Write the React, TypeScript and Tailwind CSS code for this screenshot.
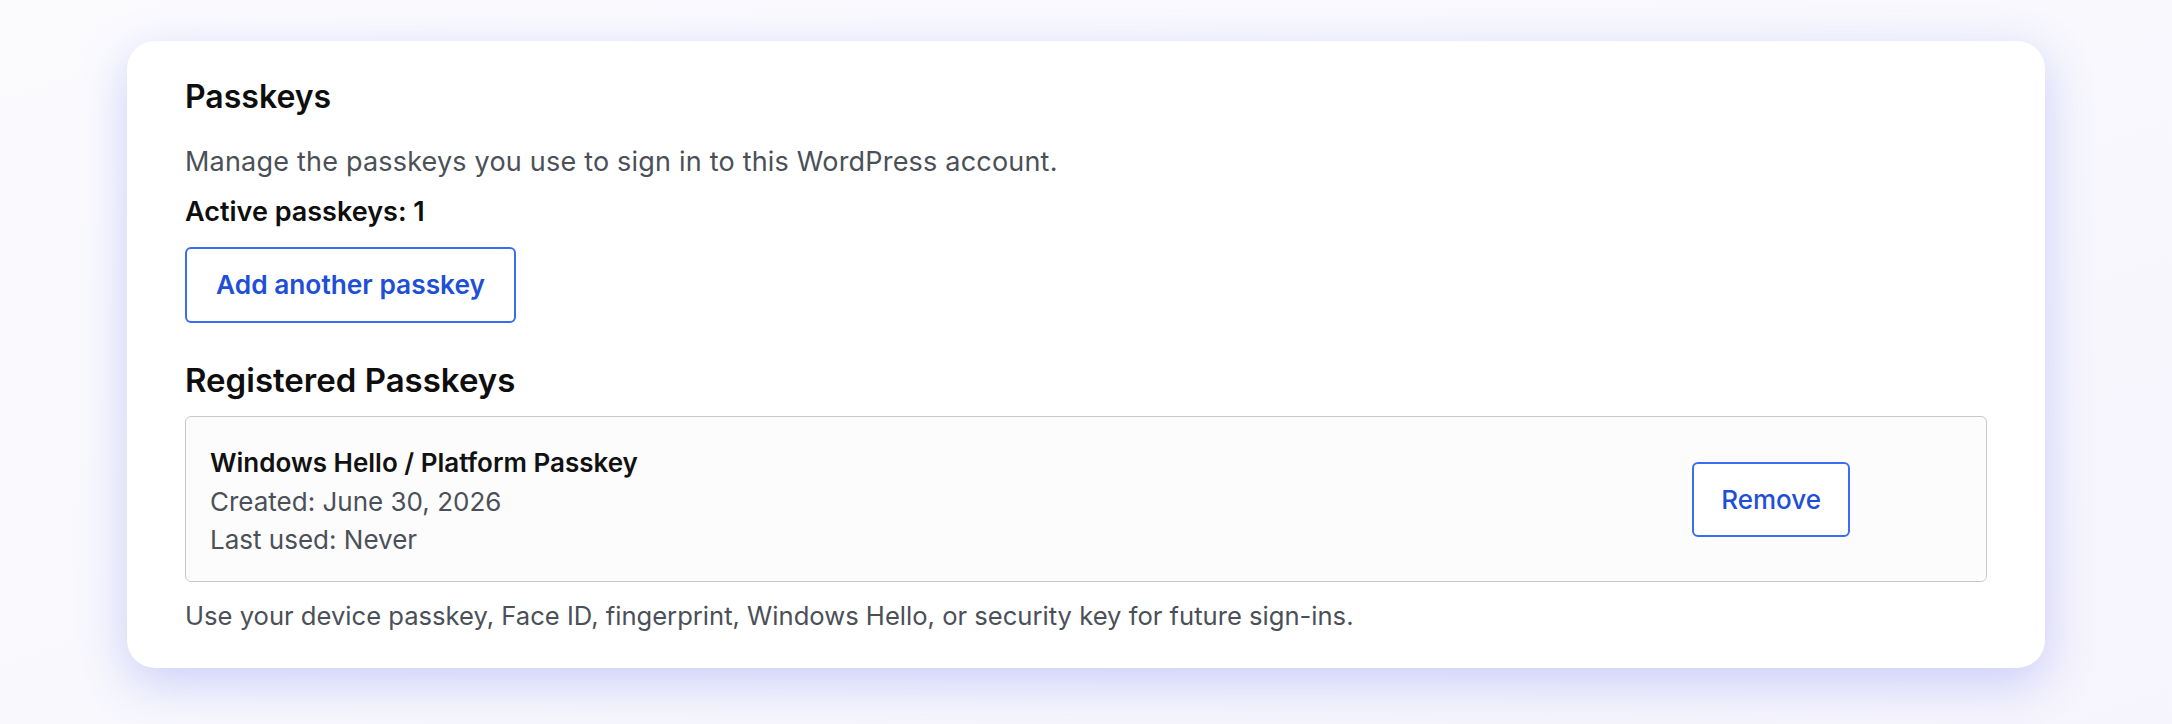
import React from "react";

type Passkey = {
  name: string;
  created: string;
  lastUsed: string;
};

const passkeys: Passkey[] = [
  {
    name: "Windows Hello / Platform Passkey",
    created: "June 30, 2026",
    lastUsed: "Never",
  },
];

function PasskeyRow({ item }: { item: Passkey }) {
  return (
    <div className="flex items-center justify-between rounded-[6px] border border-[#c8c8cc] bg-[#fcfcfc] pt-[27px] pb-[21px] pl-6 pr-[136px]">
      <div className="flex flex-col">
        <span className="text-[26px] leading-[38.5px] font-semibold text-[#111111]">{item.name}</span>
        <span className="text-[26px] leading-[38.5px] text-[#4b5058]">Created: {item.created}</span>
        <span className="text-[26px] leading-[38.5px] text-[#4b5058]">Last used: {item.lastUsed}</span>
      </div>
      <button className="mb-[5px] h-[75px] rounded-[6px] border-2 border-[#3a6df0] bg-white px-[27px] text-[26px] font-medium text-[#1e4fd8]">
        Remove
      </button>
    </div>
  );
}

export default function App() {
  return (
    <div
      className="min-h-screen w-full bg-gradient-to-br from-[#fbfbfe] via-[#f8f8fd] to-[#f6f4fd] px-[127px] pt-[41px] pb-[57px]"
      style={{ fontFamily: "Inter, 'Noto Sans', sans-serif" }}
    >
      <div className="rounded-[28px] bg-white px-[58px] pt-[36px] pb-[34px] shadow-[0_14px_48px_rgba(104,108,240,0.30)]">
        <h2 className="text-[32px] leading-[40px] font-semibold text-[#0e0e0e]">Passkeys</h2>

        <p className="mt-[27px] text-[27px] leading-[36px] tracking-[0.2px] text-[#4b5058]">
          Manage the passkeys you use to sign in to this WordPress account.
        </p>

        <p className="mt-[14px] text-[27px] leading-[36px] font-semibold text-[#0e0e0e]">
          Active passkeys: {passkeys.length}
        </p>

        <button className="mt-[17px] h-[76px] rounded-[6px] border-2 border-[#3a6df0] bg-white px-[29px] text-[26.3px] font-semibold text-[#1e4fd8]">
          Add another passkey
        </button>

        <h3 className="mt-[37px] text-[33px] leading-[40px] font-semibold text-[#0e0e0e]">Registered Passkeys</h3>

        <div className="mt-[16px] flex flex-col gap-3">
          {passkeys.map((p) => (
            <PasskeyRow key={p.name} item={p} />
          ))}
        </div>

        <p className="mt-[16px] text-[25.6px] leading-[36px] text-[#4b5058]">
          Use your device passkey, Face ID, fingerprint, Windows Hello, or security key for future sign-ins.
        </p>
      </div>
    </div>
  );
}
